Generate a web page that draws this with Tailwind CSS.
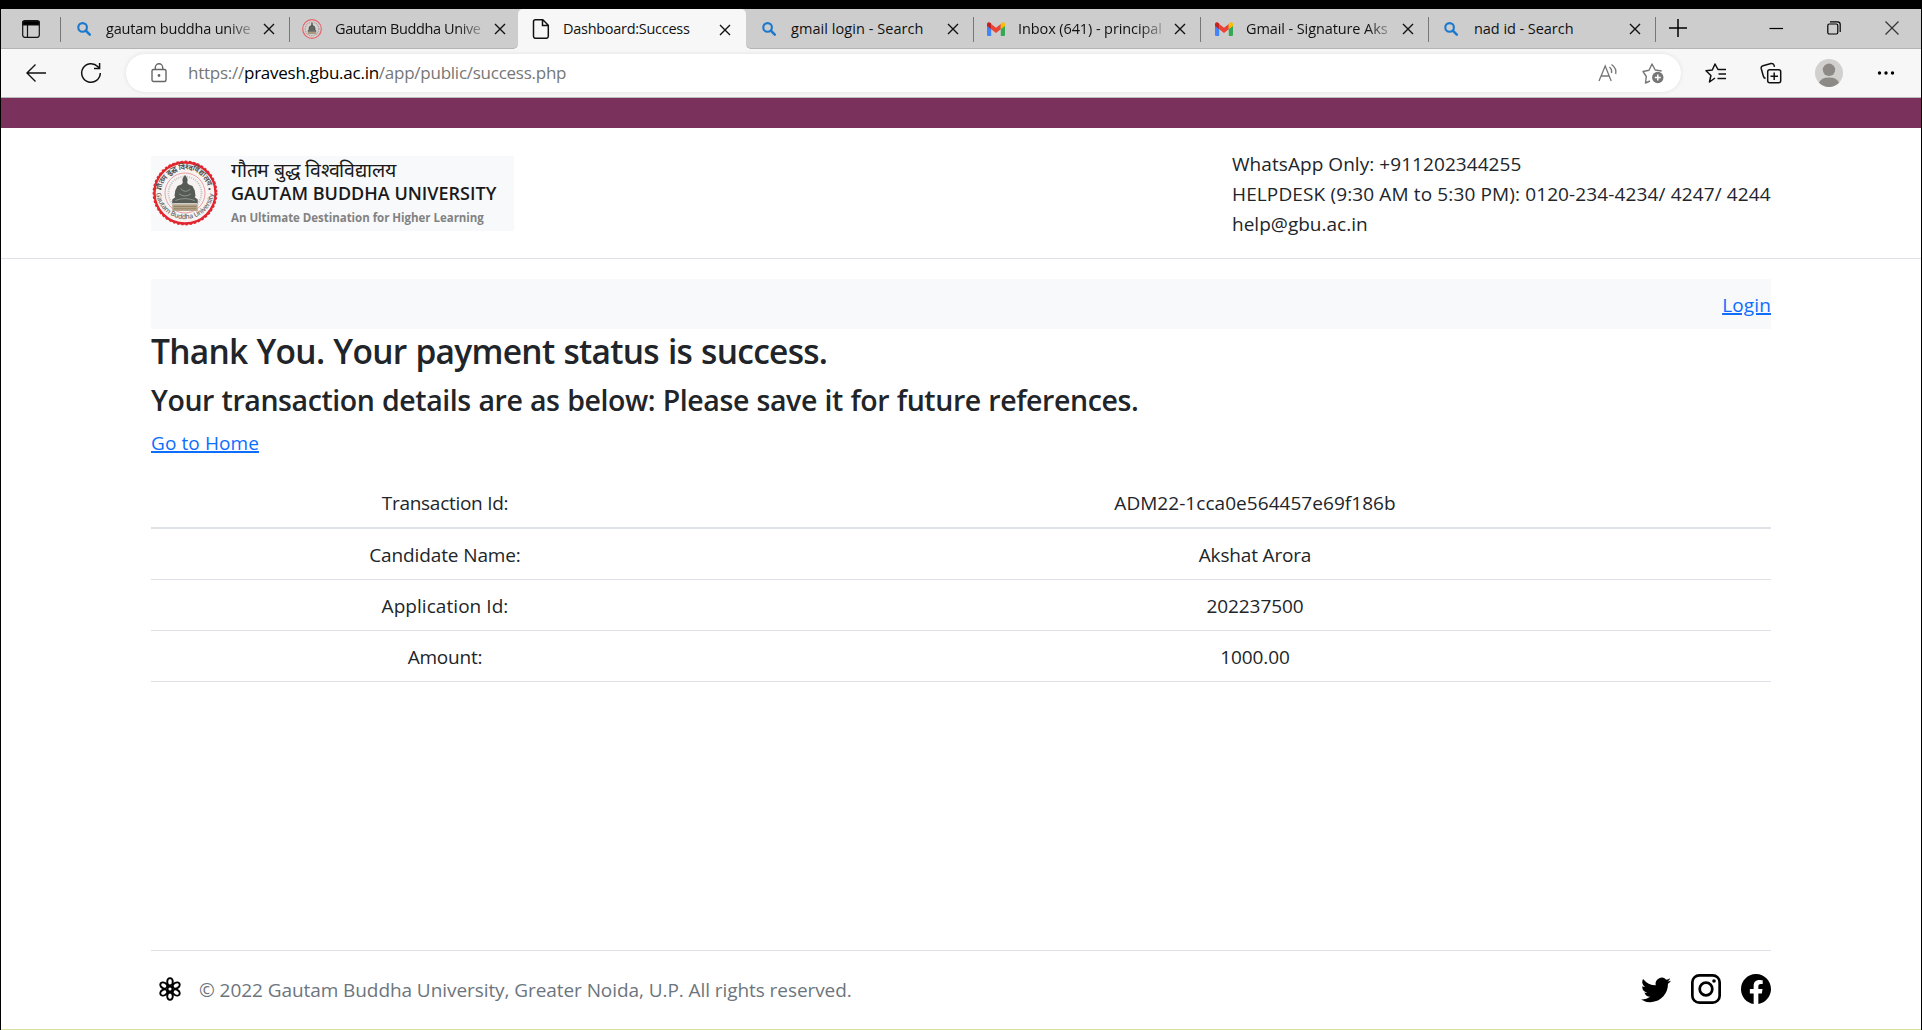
<!DOCTYPE html>
<html lang="en">
<head>
<meta charset="utf-8">
<title>Dashboard:Success</title>
<script src="https://cdn.jsdelivr.net/npm/@tailwindcss/browser@4"></script>
</head>
<body class="bg-black text-[#212529] font-['Open_Sans',sans-serif]">
<svg class="hidden">
  <symbol id="search" viewBox="0 0 20 20"><circle cx="8.6" cy="8.4" r="4.3" fill="none" stroke="#1a78cf" stroke-width="2.1"/><path d="M11.8 11.6l4 4.1" stroke="#1a78cf" stroke-width="2.5" stroke-linecap="round"/></symbol>
  <symbol id="x" viewBox="0 0 12 12"><path d="M1 1l10 10M11 1L1 11" stroke="#111" stroke-width="1.4" fill="none"/></symbol>
  <symbol id="gmail" viewBox="0 0 20 20"><path d="M1 5.5v10.2q0 1.2 1.2 1.2h3V8.5z" fill="#4285f4"/><path d="M19 5.5v10.2q0 1.2-1.2 1.2h-3V8.5z" fill="#34a853"/><path d="M5.2 5L10 8.7 14.8 5v5.2L10 13.9 5.2 10.2z" fill="#ea4335"/><path d="M1 5.3q0-2.2 2-2 .7 0 1.3.5L5.2 4.5v5.7L1 7z" fill="#c5221f"/><path d="M19 5.3q0-2.2-2-2-.7 0-1.3.5l-.9.7v5.7L19 7z" fill="#fbbc04"/></symbol>
  <symbol id="statue" viewBox="0 0 40 50"><path d="M3 40h34v9H3z" fill="#b5a489"/><path d="M5 43h30M5 46h30" stroke="#8a7a60" stroke-width="1"/><path d="M20 1l2 2.500 1.500 3-.5 5 2 2 5 2 3 6 1 7-1 2 4 3v5H3v-5l4-3-1-2 1-7 3-6 5-2 2-2-.5-5L18 3.500z" fill="#565b55"/><path d="M14 19q6 7 13 1M12 26q8 6 16 0M7 35q13-5 26 0" stroke="#90958d" stroke-width="1.300" fill="none"/></symbol>
</svg>
<div class="mt-[9px] ml-px w-[1920px] h-[1021px] bg-white flex flex-col border-b border-[#d5dfa0]">

  <!-- tab strip -->
  <div class="h-10 flex bg-[#f7f7f7] text-[14.5px] leading-5 text-[#111]">
    <div class="h-10 flex w-[517px] bg-[#cdcdcd] border-b border-[#b4b4b4] rounded-br-[5px]">
      <div class="w-[59px] shrink-0 pl-[21px] pt-[11px]"><svg class="size-[18px]" viewBox="0 0 18 18" fill="none" stroke="#111" stroke-width="1.200"><rect x=".7" y=".7" width="16.600" height="16.600" rx="2.200"/><path d="M1 1.500h16V5H1z" fill="#000"/><path d="M5.500 5v12"/></svg></div>
      <div class="h-[25px] w-px bg-[#777] mt-2"></div>
      <div class="w-[228px] flex items-center pl-[13px] pr-[14px] gap-3"><svg class="size-5 shrink-0"><use href="#search"/></svg><span class="flex-1 whitespace-nowrap tracking-[-0.2px] [mask-image:linear-gradient(to_right,#000_84%,#0004)]">gautam buddha unive</span><svg class="size-3 shrink-0 mt-px"><use href="#x"/></svg></div>
      <div class="h-[25px] w-px bg-[#777] mt-2"></div>
      <div class="w-[228px] flex items-center pl-[12px] pr-[14px] gap-[13px]"><svg class="size-5 shrink-0" viewBox="0 0 20 20"><circle cx="10" cy="10" r="9.300" fill="#d9d4d2" stroke="#e6646a" stroke-width="1.200"/><circle cx="10" cy="10" r="6.800" fill="none" stroke="#a9a4a4" stroke-width="1.500" stroke-dasharray="1 .8"/><use href="#statue" x="5" y="3" width="10" height="12.500"/></svg><span class="flex-1 whitespace-nowrap tracking-[-0.4px] [mask-image:linear-gradient(to_right,#000_84%,#0004)]">Gautam Buddha Unive</span><svg class="size-3 shrink-0 mt-px"><use href="#x"/></svg></div>
    </div>
    <div class="w-[228px] bg-linear-to-b from-[#cdcdcd] from-50% to-[#f7f7f7] to-50%">
      <div class="h-10 flex items-center pl-[13px] pr-[15px] gap-3 bg-[#f7f7f7] rounded-t-[5px]"><svg class="size-5 shrink-0" viewBox="0 0 20 20" fill="none" stroke="#111" stroke-width="1.500"><path d="M4.500.8h7.300l5.500 5.500v11q0 2-2 2H4.500q-2 0-2-2V2.800q0-2 2-2zM11.500 1v5.600H17"/></svg><span class="flex-1 whitespace-nowrap tracking-[-0.28px]">Dashboard:Success</span><svg class="size-3 shrink-0 mt-px"><use href="#x"/></svg></div>
    </div>
    <div class="h-10 flex flex-1 bg-[#cdcdcd] border-b border-[#b4b4b4] rounded-bl-[5px]">
      <div class="w-[227px] flex items-center pl-[13px] pr-[14px] gap-3"><svg class="size-5 shrink-0"><use href="#search"/></svg><span class="flex-1 whitespace-nowrap tracking-[0.06px]">gmail login - Search</span><svg class="size-3 shrink-0 mt-px"><use href="#x"/></svg></div>
      <div class="h-[25px] w-px bg-[#777] mt-2"></div>
      <div class="w-[226px] flex items-center pl-[12px] pr-[14px] gap-3"><svg class="size-5 shrink-0"><use href="#gmail"/></svg><span class="flex-1 whitespace-nowrap tracking-[-0.1px] [mask-image:linear-gradient(to_right,#000_84%,#0004)]">Inbox (641) - principal</span><svg class="size-3 shrink-0 mt-px"><use href="#x"/></svg></div>
      <div class="h-[25px] w-px bg-[#777] mt-2"></div>
      <div class="w-[227px] flex items-center pl-[13px] pr-[14px] gap-3"><svg class="size-5 shrink-0"><use href="#gmail"/></svg><span class="flex-1 whitespace-nowrap tracking-[-0.1px] [mask-image:linear-gradient(to_right,#000_84%,#0004)]">Gmail - Signature Aks</span><svg class="size-3 shrink-0 mt-px"><use href="#x"/></svg></div>
      <div class="h-[25px] w-px bg-[#777] mt-2"></div>
      <div class="w-[226px] flex items-center pl-[12px] pr-[14px] gap-3"><svg class="size-5 shrink-0"><use href="#search"/></svg><span class="flex-1 whitespace-nowrap pl-px tracking-[-0.05px]">nad id - Search</span><svg class="size-3 shrink-0 mt-px"><use href="#x"/></svg></div>
      <div class="h-[25px] w-px bg-[#777] mt-2"></div>
      <div class="flex-1 flex items-center justify-between pl-[13px] pr-[22px] pb-px text-black">
        <svg class="size-[18px]" viewBox="0 0 18 18" stroke="currentColor" stroke-width="1.500"><path d="M9 0v18M0 9h18"/></svg>
        <div class="flex gap-[44px] items-center">
          <svg class="size-[14px]" viewBox="0 0 14 14" stroke="currentColor" stroke-width="1.200"><path d="M.5 7.500H14"/></svg>
          <svg class="size-[14px]" viewBox="0 0 14 14" stroke="currentColor" stroke-width="1.200" fill="none"><rect x=".8" y="3" width="10" height="10" rx="1.500"/><path d="M3 .8h7.500q2.700 0 2.700 2.700V11"/></svg>
          <svg class="size-[14px]" viewBox="0 0 14 14" stroke="#333" stroke-width="1.200"><path d="M.5.500l13 13M13.500.500l-13 13"/></svg>
        </div>
      </div>
    </div>
  </div>

  <!-- toolbar -->
  <div class="h-[49px] flex items-center bg-[#f7f7f7] border-b border-[#bbb] pl-[25px] pb-px">
    <svg class="w-5 h-[18px]" viewBox="0 0 20 18" fill="none" stroke="#111" stroke-width="1.400"><path d="M20 9H1M9.500.600L1 9l8.500 8.400"/></svg>
    <svg class="size-[22px] ml-[34px]" viewBox="0 0 22 22" fill="none" stroke="#111" stroke-width="1.500"><path d="M20.300 11a9.300 9.300 0 1 1-2.600-6.500l1.500 1.600M19.600 1v5.500H14"/></svg>
    <div class="ml-[24px] w-[1555px] h-[38px] rounded-full bg-white shadow-[0_0_4px_rgba(0,0,0,0.1)] flex items-center pl-[25px] pr-[17px]">
      <svg class="w-4 h-[20px]" viewBox="0 0 16 20" fill="none" stroke="#666" stroke-width="1.400"><rect x="1" y="6.500" width="14" height="12" rx="1.500"/><path d="M4.300 6.500V4.500a3.700 3.700 0 0 1 7.400 0v2"/><circle cx="8" cy="12.500" r=".7" fill="#666"/></svg>
      <span class="ml-[21px] flex-1 whitespace-nowrap text-[17px] leading-6 tracking-[-0.25px] text-[#767676]">https://<span class="text-black">pravesh.gbu.ac.in</span>/app/public/success.php</span>
      <svg class="w-5 h-[20px]" viewBox="0 0 20 20" fill="none" stroke="#767676" stroke-width="1.300"><path d="M1 18L7.200 3l6 15M3.200 13h8M11.500 4q2.800 2.500 2 6M13.500 1.500Q19 5.500 17.700 11"/></svg>
      <svg class="w-[22px] h-[22px] ml-[24px]" viewBox="0 0 22 22"><path d="M8 19l-4.500 2 .8-6.500L1 9.500l6-1.200L10 2l3.200 6 6.500 1" fill="none" stroke="#767676" stroke-width="1.400" stroke-linejoin="round"/><circle cx="15.800" cy="15.500" r="5.700" fill="#767676"/><path d="M15.800 12.500v6M12.800 15.500h6" stroke="#fff" stroke-width="1.500"/></svg>
    </div>
    <svg class="w-[22px] h-[22px] ml-[24px]" viewBox="0 0 22 22" fill="none" stroke="#111" stroke-width="1.500" stroke-linejoin="round"><path d="M10 16l-5.500 4 1.400-6.500L1 8.800l6.300-.8L10 2l3 5.500h8M13.500 12H21M12.500 16.500H21"/></svg>
    <svg class="w-[22px] h-[22px] ml-[33px]" viewBox="0 0 22 22" fill="none" stroke="#111" stroke-width="1.500"><rect x="7.700" y="7.700" width="13" height="13" rx="2"/><path d="M14.200 10.500v7.500M10.500 14.200H18M5.500 16.500q-1.700-.6-2.200-2.500L1.200 6.500Q.8 4.300 3 3.700l8-2.200q2.200-.4 2.900 1.400l.6 2"/></svg>
    <svg class="size-7 ml-[33px]" viewBox="0 0 28 28"><circle cx="14" cy="14" r="14" fill="#d2d0ce"/><circle cx="14" cy="10.800" r="6.200" fill="#8d8986"/><path d="M4 23.800Q6 18.500 14 18.500t10 5.300A14 14 0 0 1 4 23.800z" fill="#8d8986"/></svg>
    <svg class="w-[18px] h-1 ml-[34px]" viewBox="0 0 18 4"><circle cx="2.500" cy="2" r="1.700"/><circle cx="9" cy="2" r="1.700"/><circle cx="15.500" cy="2" r="1.700"/></svg>
  </div>

  <div class="h-[30px] bg-[#7a325c]"></div>

  <!-- site header -->
  <header class="h-[131px] border-b border-[#dee2e6] px-[150px] flex items-center justify-between">
    <div class="w-[363px] h-[75px] bg-[#f8f9fb] flex items-center gap-[13px]">
      <svg class="size-[66px] ml-px -mt-px" viewBox="0 0 66 66">
        <defs><path id="top" d="M9.500 33a23.500 23.500 0 0 1 47 0"/><path id="bot" d="M4 30a29 29 0 0 0 58 0"/></defs>
        <circle cx="33" cy="33" r="30.500" fill="#f7f3f2" stroke="#e2262f" stroke-width="2.300"/>
        <circle cx="33" cy="33" r="31.300" fill="none" stroke="#e2262f" stroke-width="2.200" stroke-dasharray="2.400 1.800"/>
        <circle cx="33" cy="33" r="20" fill="none" stroke="#e58a8f" stroke-width=".8"/>
        <circle cx="33" cy="33" r="16.500" fill="none" stroke="#c2bfbf" stroke-width="1.800" stroke-dasharray="1 1.200"/>
        <text font-size="7.500" font-weight="600" fill="#555"><textPath href="#top" startOffset="3">गौतम बुद्ध विश्वविद्यालय</textPath></text>
        <text font-size="6.800" font-weight="600" fill="#6b6b6b"><textPath href="#bot" startOffset="3" textLength="84">Gautam Buddha University</textPath></text>
        <circle cx="8.500" cy="29" r="1.100" fill="#444"/><circle cx="57.500" cy="29" r="1.100" fill="#444"/>
        <use href="#statue" x="18" y="14" width="30" height="38"/>
      </svg>
      <div class="flex flex-col whitespace-nowrap -mt-[2px]">
        <span class="h-[23px] text-[19.5px] leading-6 text-[#1a1a1a] tracking-[-0.27px]">गौतम बुद्ध विश्वविद्यालय</span>
        <span class="h-[26px] text-[18px] leading-6 font-semibold text-[#1a1a1a]">GAUTAM BUDDHA UNIVERSITY</span>
        <span class="h-5 text-[11.5px] leading-[22px] font-bold text-[#828282] tracking-[-0.03px]">An Ultimate Destination for Higher Learning</span>
      </div>
    </div>
    <div class="w-[539px] pt-[2px] text-[19px] leading-[30px] whitespace-nowrap">
      <p class="tracking-[0.06px]">WhatsApp Only: +911202344255</p>
      <p class="tracking-[0.13px]">HELPDESK (9:30 AM to 5:30 PM): 0120-234-4234/ 4247/ 4244</p>
      <p class="tracking-[0.02px]">help@gbu.ac.in</p>
    </div>
  </header>

  <main class="mx-[150px] mt-5 flex-1 text-[19px] leading-[30px]">
    <div class="h-[50px] pt-[11px] bg-[#f8f9fb] text-right"><a class="text-[#0d6efd] underline decoration-2 underline-offset-1 tracking-[0.15px]">Login</a></div>
    <h1 class="h-[43px] pt-px mb-[9px] text-[33.5px] leading-[42px] font-semibold tracking-[-0.72px] [word-spacing:1px]">Thank You. Your payment status is success.</h1>
    <h2 class="h-[37px] pt-px mb-[10px] text-[28.5px] leading-9 font-semibold tracking-[-0.42px] [word-spacing:0.6px]">Your transaction details are as below: Please save it for future references.</h2>
    <a class="block w-max text-[#0d6efd] underline decoration-2 underline-offset-1 tracking-[0.1px]">Go to Home</a>
    <div class="mt-[19px] grid grid-cols-[588px_1fr] text-center *:pt-[11px] *:border-[#dee2e6]">
      <div class="h-[52px] border-b-2 tracking-[-0.28px]">Transaction Id:</div><div class="border-b-2 tracking-[0.05px]">ADM22-1cca0e564457e69f186b</div>
      <div class="h-[51px] border-b tracking-[-0.12px]">Candidate Name:</div><div class="border-b tracking-[-0.17px]">Akshat Arora</div>
      <div class="h-[51px] border-b tracking-[0.05px]">Application Id:</div><div class="border-b tracking-[-0.1px]">202237500</div>
      <div class="h-[51px] border-b tracking-[-0.2px]">Amount:</div><div class="border-b tracking-[-0.1px]">1000.00</div>
    </div>
  </main>

  <footer class="mx-[150px] h-[79px] border-t border-[#dee2e6] flex items-center justify-between pb-[2px]">
    <div class="flex items-center">
      <svg class="size-6 ml-[7px]" viewBox="0 0 24 24" fill="none" stroke="#000" stroke-width="1.900"><g id="petals"><ellipse cx="12" cy="4.800" rx="2.800" ry="3.700"/><ellipse cx="12" cy="19.200" rx="2.800" ry="3.700"/></g><use href="#petals" transform="rotate(60 12 12)"/><use href="#petals" transform="rotate(120 12 12)"/><circle cx="12" cy="12" r="2.500"/></svg>
      <span class="ml-[17px] mt-px text-[19px] leading-[30px] whitespace-nowrap text-[#6c757d] tracking-[-0.07px]">© 2022 Gautam Buddha University, Greater Noida, U.P. All rights reserved.</span>
    </div>
    <div class="flex gap-5">
      <svg class="size-[30px]" viewBox="0 0 16 16"><path d="M5.026 15c6.038 0 9.341-5.003 9.341-9.334 0-.14 0-.282-.006-.422A6.685 6.685 0 0 0 16 3.542a6.658 6.658 0 0 1-1.889.518 3.301 3.301 0 0 0 1.447-1.817 6.533 6.533 0 0 1-2.087.793A3.286 3.286 0 0 0 7.875 6.030a9.325 9.325 0 0 1-6.767-3.429 3.289 3.289 0 0 0 1.018 4.382A3.323 3.323 0 0 1 .640 6.575v.045a3.288 3.288 0 0 0 2.632 3.218 3.203 3.203 0 0 1-.865.115 3.230 3.230 0 0 1-.614-.057 3.283 3.283 0 0 0 3.067 2.277A6.588 6.588 0 0 1 .780 13.580a6.320 6.320 0 0 1-.780-.045A9.344 9.344 0 0 0 5.026 15z"/></svg>
      <svg class="size-[30px]" viewBox="0 0 30 30" fill="none" stroke="#000" stroke-width="2.700"><rect x="1.350" y="1.350" width="27.300" height="27.300" rx="7"/><circle cx="15" cy="15" r="6.300"/><circle cx="23" cy="7" r="1.800" fill="#000" stroke="none"/></svg>
      <svg class="size-[30px]" viewBox="0 0 16 16"><path d="M16 8.049c0-4.446-3.582-8.050-8-8.050C3.580 0-.002 3.603-.002 8.050c0 4.017 2.926 7.347 6.750 7.951v-5.625h-2.030V8.050H6.750V6.275c0-2.017 1.195-3.131 3.022-3.131.876 0 1.791.157 1.791.157v1.980h-1.009c-.993 0-1.303.621-1.303 1.258v1.510h2.218l-.354 2.326H9.250V16c3.824-.604 6.750-3.934 6.750-7.951z"/></svg>
    </div>
  </footer>
</div>
</body>
</html>
